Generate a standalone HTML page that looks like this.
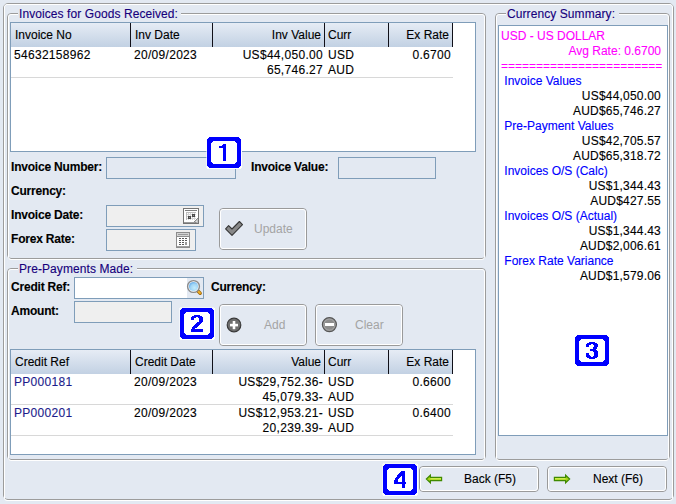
<!DOCTYPE html>
<html><head><meta charset="utf-8">
<style>
*{margin:0;padding:0;box-sizing:border-box}
html,body{width:676px;height:504px;overflow:hidden;background:#E3E9F2;font-family:"Liberation Sans",sans-serif;font-size:12px;color:#000}
body{-webkit-text-stroke:0.12px currentColor}
.a{position:absolute}
.etch{position:absolute;border:1px solid #9C9C9C;border-radius:4px}
.etch::before{content:"";position:absolute;left:0;top:0;right:0;bottom:-2px;border:1px solid #fff;border-radius:3px}
.gt{position:absolute;background:#E3E9F2;color:#16007C;padding:0 3.5px 0 1px;line-height:14px;white-space:nowrap;letter-spacing:0.08px}
.lbl{position:absolute;font-weight:bold;color:#000;white-space:nowrap;line-height:14px;letter-spacing:-0.2px}
.fld{position:absolute;border:1px solid #7F9DB9;background:transparent}
.tbl{position:absolute;border:1px solid #7F9DB9;background:#fff;overflow:hidden}
.hdr{position:absolute;left:0;top:0;height:24px;background:linear-gradient(#E6ECF5,#C2D1E3)}
.hc{position:absolute;top:0;height:24px;line-height:24px;color:#000;white-space:nowrap;border-right:1px solid #101018}
.row{position:absolute;left:0;height:31px;border-bottom:1px solid #D8D8D8}
.c{position:absolute;top:1px;line-height:15px;white-space:nowrap;color:#000;letter-spacing:0.3px}
.r{text-align:right}
.bd{position:absolute;width:34px;height:31px;font-weight:bold;font-size:24px;line-height:31px;text-align:center;color:#0000FF;-webkit-text-stroke:0}
.btn{position:absolute;border:1px solid #9A9A9A;border-radius:4px}
.btn::before{content:"";position:absolute;left:0;top:0;right:0;bottom:0;border:1px solid #fff;border-radius:3px}
.bt{position:absolute;white-space:nowrap;line-height:14px}
.dis{-webkit-text-stroke:0}
.sum{position:absolute;white-space:nowrap;line-height:15px}
.sum.r{letter-spacing:0.2px}
</style></head><body>

<!-- outer frame -->
<div class="etch" style="left:3px;top:3px;width:671px;height:497px;border-radius:5px"></div>

<!-- group 1 -->
<div class="etch" style="left:7px;top:13px;width:479px;height:246px"></div>
<div class="gt" style="left:18px;top:7px">Invoices for Goods Received:</div>

<div class="tbl" style="left:10px;top:22px;width:466px;height:130px">
  <div class="hdr" style="width:442px"></div>
  <div class="hc" style="left:0;width:120px;padding-left:4px">Invoice No</div>
  <div class="hc" style="left:120px;width:82px;padding-left:4px">Inv Date</div>
  <div class="hc r" style="left:202px;width:112px;padding-right:3px">Inv Value</div>
  <div class="hc" style="left:314px;width:64px;padding-left:3px">Curr</div>
  <div class="hc r" style="left:378px;width:64px;padding-right:3px">Ex Rate</div>
  <div class="row" style="top:24px;width:442px">
    <div class="c" style="left:3px">54632158962</div>
    <div class="c" style="left:123px">20/09/2023</div>
    <div class="c r" style="left:202px;width:110px">US$44,050.00<br>65,746.27</div>
    <div class="c" style="left:317px">USD<br>AUD</div>
    <div class="c r" style="left:378px;width:62px">0.6700</div>
  </div>
</div>

<div class="lbl" style="left:11px;top:160px">Invoice Number:</div>
<div class="fld" style="left:106px;top:157px;width:130px;height:22px"></div>
<div class="lbl" style="left:251px;top:160px">Invoice Value:</div>
<div class="fld" style="left:338px;top:157px;width:98px;height:22px"></div>
<div class="lbl" style="left:11px;top:184px">Currency:</div>
<div class="lbl" style="left:11px;top:208px">Invoice Date:</div>
<div class="fld" style="left:106px;top:205px;width:98px;height:22px;background:#EFEFEF"></div>
<div class="lbl" style="left:11px;top:232px">Forex Rate:</div>
<div class="fld" style="left:106px;top:229px;width:90px;height:22px;background:#EFEFEF"></div>

<div class="btn" style="left:219px;top:208px;width:88px;height:42px"></div>
<div class="bt dis" style="left:254px;top:222px;color:#A4A4A4">Update</div>


<!-- calendar icon -->
<svg class="a" style="left:183px;top:208px" width="16" height="16" viewBox="0 0 16 16" shape-rendering="crispEdges"><rect width="16" height="16" fill="#fff"/><rect x="0" y="0" width="1" height="1" fill="#747474"/><rect x="0" y="1" width="1" height="1" fill="#747474"/><rect x="0" y="2" width="1" height="1" fill="#747474"/><rect x="0" y="3" width="1" height="1" fill="#747474"/><rect x="0" y="4" width="1" height="1" fill="#747474"/><rect x="0" y="5" width="1" height="1" fill="#747474"/><rect x="0" y="6" width="1" height="1" fill="#747474"/><rect x="0" y="7" width="1" height="1" fill="#747474"/><rect x="0" y="8" width="1" height="1" fill="#747474"/><rect x="0" y="9" width="1" height="1" fill="#747474"/><rect x="0" y="10" width="1" height="1" fill="#747474"/><rect x="0" y="11" width="1" height="1" fill="#747474"/><rect x="0" y="12" width="1" height="1" fill="#747474"/><rect x="0" y="13" width="1" height="1" fill="#747474"/><rect x="0" y="14" width="1" height="1" fill="#747474"/><rect x="0" y="15" width="1" height="1" fill="#747474"/><rect x="1" y="0" width="1" height="1" fill="#747474"/><rect x="1" y="14" width="1" height="1" fill="#9A9A9A"/><rect x="1" y="15" width="1" height="1" fill="#747474"/><rect x="2" y="0" width="1" height="1" fill="#747474"/><rect x="2" y="2" width="1" height="1" fill="#7C7C7C"/><rect x="2" y="14" width="1" height="1" fill="#9A9A9A"/><rect x="2" y="15" width="1" height="1" fill="#747474"/><rect x="3" y="0" width="1" height="1" fill="#747474"/><rect x="3" y="2" width="1" height="1" fill="#7C7C7C"/><rect x="3" y="4" width="1" height="1" fill="#BDBDBD"/><rect x="3" y="5" width="1" height="1" fill="#BDBDBD"/><rect x="3" y="6" width="1" height="1" fill="#BDBDBD"/><rect x="3" y="7" width="1" height="1" fill="#BDBDBD"/><rect x="3" y="8" width="1" height="1" fill="#BDBDBD"/><rect x="3" y="9" width="1" height="1" fill="#BDBDBD"/><rect x="3" y="10" width="1" height="1" fill="#BDBDBD"/><rect x="3" y="11" width="1" height="1" fill="#BDBDBD"/><rect x="3" y="14" width="1" height="1" fill="#9A9A9A"/><rect x="3" y="15" width="1" height="1" fill="#747474"/><rect x="4" y="0" width="1" height="1" fill="#747474"/><rect x="4" y="2" width="1" height="1" fill="#7C7C7C"/><rect x="4" y="4" width="1" height="1" fill="#BDBDBD"/><rect x="4" y="6" width="1" height="1" fill="#D4D4D4"/><rect x="4" y="8" width="1" height="1" fill="#D4D4D4"/><rect x="4" y="10" width="1" height="1" fill="#D4D4D4"/><rect x="4" y="14" width="1" height="1" fill="#9A9A9A"/><rect x="4" y="15" width="1" height="1" fill="#747474"/><rect x="5" y="0" width="1" height="1" fill="#747474"/><rect x="5" y="2" width="1" height="1" fill="#7C7C7C"/><rect x="5" y="4" width="1" height="1" fill="#BDBDBD"/><rect x="5" y="5" width="1" height="1" fill="#D4D4D4"/><rect x="5" y="6" width="1" height="1" fill="#D4D4D4"/><rect x="5" y="7" width="1" height="1" fill="#D4D4D4"/><rect x="5" y="8" width="1" height="1" fill="#4A4A4A"/><rect x="5" y="9" width="1" height="1" fill="#4A4A4A"/><rect x="5" y="10" width="1" height="1" fill="#4A4A4A"/><rect x="5" y="11" width="1" height="1" fill="#D4D4D4"/><rect x="5" y="14" width="1" height="1" fill="#9A9A9A"/><rect x="5" y="15" width="1" height="1" fill="#747474"/><rect x="6" y="0" width="1" height="1" fill="#747474"/><rect x="6" y="2" width="1" height="1" fill="#7C7C7C"/><rect x="6" y="4" width="1" height="1" fill="#BDBDBD"/><rect x="6" y="6" width="1" height="1" fill="#D4D4D4"/><rect x="6" y="8" width="1" height="1" fill="#4A4A4A"/><rect x="6" y="9" width="1" height="1" fill="#8C8C8C"/><rect x="6" y="10" width="1" height="1" fill="#4A4A4A"/><rect x="6" y="14" width="1" height="1" fill="#9A9A9A"/><rect x="6" y="15" width="1" height="1" fill="#747474"/><rect x="7" y="0" width="1" height="1" fill="#747474"/><rect x="7" y="2" width="1" height="1" fill="#7C7C7C"/><rect x="7" y="4" width="1" height="1" fill="#BDBDBD"/><rect x="7" y="5" width="1" height="1" fill="#D4D4D4"/><rect x="7" y="6" width="1" height="1" fill="#D4D4D4"/><rect x="7" y="7" width="1" height="1" fill="#D4D4D4"/><rect x="7" y="8" width="1" height="1" fill="#4A4A4A"/><rect x="7" y="9" width="1" height="1" fill="#4A4A4A"/><rect x="7" y="10" width="1" height="1" fill="#4A4A4A"/><rect x="7" y="11" width="1" height="1" fill="#D4D4D4"/><rect x="7" y="14" width="1" height="1" fill="#9A9A9A"/><rect x="7" y="15" width="1" height="1" fill="#747474"/><rect x="8" y="0" width="1" height="1" fill="#747474"/><rect x="8" y="2" width="1" height="1" fill="#7C7C7C"/><rect x="8" y="4" width="1" height="1" fill="#BDBDBD"/><rect x="8" y="6" width="1" height="1" fill="#D4D4D4"/><rect x="8" y="8" width="1" height="1" fill="#D4D4D4"/><rect x="8" y="10" width="1" height="1" fill="#D4D4D4"/><rect x="8" y="14" width="1" height="1" fill="#9A9A9A"/><rect x="8" y="15" width="1" height="1" fill="#747474"/><rect x="9" y="0" width="1" height="1" fill="#747474"/><rect x="9" y="2" width="1" height="1" fill="#7C7C7C"/><rect x="9" y="4" width="1" height="1" fill="#BDBDBD"/><rect x="9" y="5" width="1" height="1" fill="#D4D4D4"/><rect x="9" y="6" width="1" height="1" fill="#4A4A4A"/><rect x="9" y="7" width="1" height="1" fill="#4A4A4A"/><rect x="9" y="8" width="1" height="1" fill="#4A4A4A"/><rect x="9" y="9" width="1" height="1" fill="#D4D4D4"/><rect x="9" y="10" width="1" height="1" fill="#D4D4D4"/><rect x="9" y="11" width="1" height="1" fill="#D4D4D4"/><rect x="9" y="14" width="1" height="1" fill="#9A9A9A"/><rect x="9" y="15" width="1" height="1" fill="#747474"/><rect x="10" y="0" width="1" height="1" fill="#747474"/><rect x="10" y="2" width="1" height="1" fill="#7C7C7C"/><rect x="10" y="4" width="1" height="1" fill="#BDBDBD"/><rect x="10" y="6" width="1" height="1" fill="#4A4A4A"/><rect x="10" y="7" width="1" height="1" fill="#8C8C8C"/><rect x="10" y="8" width="1" height="1" fill="#4A4A4A"/><rect x="10" y="10" width="1" height="1" fill="#D4D4D4"/><rect x="10" y="14" width="1" height="1" fill="#9A9A9A"/><rect x="10" y="15" width="1" height="1" fill="#747474"/><rect x="11" y="0" width="1" height="1" fill="#747474"/><rect x="11" y="2" width="1" height="1" fill="#7C7C7C"/><rect x="11" y="4" width="1" height="1" fill="#BDBDBD"/><rect x="11" y="5" width="1" height="1" fill="#D4D4D4"/><rect x="11" y="6" width="1" height="1" fill="#4A4A4A"/><rect x="11" y="7" width="1" height="1" fill="#4A4A4A"/><rect x="11" y="8" width="1" height="1" fill="#4A4A4A"/><rect x="11" y="9" width="1" height="1" fill="#D4D4D4"/><rect x="11" y="10" width="1" height="1" fill="#D4D4D4"/><rect x="11" y="11" width="1" height="1" fill="#D4D4D4"/><rect x="11" y="13" width="1" height="1" fill="#8A8A8A"/><rect x="11" y="14" width="1" height="1" fill="#9A9A9A"/><rect x="11" y="15" width="1" height="1" fill="#747474"/><rect x="12" y="0" width="1" height="1" fill="#747474"/><rect x="12" y="2" width="1" height="1" fill="#7C7C7C"/><rect x="12" y="4" width="1" height="1" fill="#BDBDBD"/><rect x="12" y="6" width="1" height="1" fill="#D4D4D4"/><rect x="12" y="8" width="1" height="1" fill="#D4D4D4"/><rect x="12" y="10" width="1" height="1" fill="#D4D4D4"/><rect x="12" y="12" width="1" height="1" fill="#8A8A8A"/><rect x="12" y="13" width="1" height="1" fill="#C4C4C4"/><rect x="12" y="14" width="1" height="1" fill="#8A8A8A"/><rect x="12" y="15" width="1" height="1" fill="#747474"/><rect x="13" y="0" width="1" height="1" fill="#747474"/><rect x="13" y="2" width="1" height="1" fill="#7C7C7C"/><rect x="13" y="11" width="1" height="1" fill="#8A8A8A"/><rect x="13" y="12" width="1" height="1" fill="#C4C4C4"/><rect x="13" y="13" width="1" height="1" fill="#E0E0E0"/><rect x="13" y="14" width="1" height="1" fill="#A8A8A8"/><rect x="13" y="15" width="1" height="1" fill="#747474"/><rect x="14" y="0" width="1" height="1" fill="#747474"/><rect x="14" y="10" width="1" height="1" fill="#8A8A8A"/><rect x="14" y="11" width="1" height="1" fill="#C4C4C4"/><rect x="14" y="12" width="1" height="1" fill="#C4C4C4"/><rect x="14" y="13" width="1" height="1" fill="#C4C4C4"/><rect x="14" y="14" width="1" height="1" fill="#BBBBBB"/><rect x="14" y="15" width="1" height="1" fill="#747474"/><rect x="15" y="0" width="1" height="1" fill="#747474"/><rect x="15" y="1" width="1" height="1" fill="#747474"/><rect x="15" y="2" width="1" height="1" fill="#747474"/><rect x="15" y="3" width="1" height="1" fill="#747474"/><rect x="15" y="4" width="1" height="1" fill="#747474"/><rect x="15" y="5" width="1" height="1" fill="#747474"/><rect x="15" y="6" width="1" height="1" fill="#747474"/><rect x="15" y="7" width="1" height="1" fill="#747474"/><rect x="15" y="8" width="1" height="1" fill="#747474"/><rect x="15" y="9" width="1" height="1" fill="#747474"/><rect x="15" y="10" width="1" height="1" fill="#747474"/><rect x="15" y="11" width="1" height="1" fill="#747474"/><rect x="15" y="12" width="1" height="1" fill="#747474"/><rect x="15" y="13" width="1" height="1" fill="#747474"/><rect x="15" y="14" width="1" height="1" fill="#747474"/><rect x="15" y="15" width="1" height="1" fill="#747474"/></svg>
<!-- calculator icon -->
<svg class="a" style="left:176px;top:232px" width="14" height="16" viewBox="0 0 14 16" shape-rendering="crispEdges">
<rect x="0" y="0" width="14" height="16" fill="#8C8C8C"/>
<rect x="1" y="1" width="12" height="3" fill="#D4D4D4"/>
<rect x="2" y="2" width="10" height="1" fill="#9A9A9A"/>
<rect x="1" y="5" width="12" height="9" fill="#fff"/>
<rect x="3" y="6" width="2" height="1" fill="#5A5A5A"/><rect x="6" y="6" width="2" height="1" fill="#5A5A5A"/><rect x="9" y="6" width="2" height="1" fill="#5A5A5A"/>
<rect x="3" y="8" width="2" height="1" fill="#5A5A5A"/><rect x="6" y="8" width="2" height="1" fill="#5A5A5A"/><rect x="9" y="8" width="2" height="1" fill="#5A5A5A"/>
<rect x="3" y="10" width="2" height="1" fill="#5A5A5A"/><rect x="6" y="10" width="2" height="1" fill="#5A5A5A"/><rect x="9" y="10" width="2" height="3" fill="#9A9A9A"/>
<rect x="3" y="12" width="2" height="1" fill="#5A5A5A"/><rect x="6" y="12" width="2" height="1" fill="#5A5A5A"/>
<rect x="1" y="14" width="12" height="1" fill="#A0A0A0"/>
</svg>
<!-- check icon -->
<svg class="a" style="left:222px;top:218px" width="24" height="22" viewBox="0 0 24 22">
<path d="M3.6 10.9 L6.6 7.7 L10 11 L17.4 3.5 L20.5 6.6 L10 17.3 Z" fill="#888" stroke="#353535" stroke-width="1.1" stroke-linejoin="round"/>
</svg>

<svg class="a" style="left:206px;top:136px" width="36" height="33" viewBox="-1 -1 36 33" shape-rendering="crispEdges"><path d="M0 -1H34V0H35V31H34V32H0V31H-1V0H0Z" fill="#fff" fill-opacity="0.55"/><path d="M34 0H35V31H34V32H0V30H34Z" fill="#fff"/><path d="M2 0H32V1H33V2H34V29H33V30H32V31H2V30H1V29H0V2H1V1H2Z" fill="#0000FF"/><path d="M6 4H28V5H29V6H30V25H29V26H28V27H6V26H5V25H4V6H5V5H6Z" fill="#fff"/><path d="M16 7h3v17h-3ZM15 8h1v1h-1ZM12 9h4v2h-4Z" fill="#0000FF"/></svg>

<!-- group 2 -->
<div class="etch" style="left:7px;top:268px;width:479px;height:192px"></div>
<div class="gt" style="left:18px;top:262px">Pre-Payments Made:</div>
<div class="lbl" style="left:11px;top:280px">Credit Ref:</div>
<div class="fld" style="left:74px;top:277px;width:130px;height:22px;background:#fff"></div>
<div class="lbl" style="left:211px;top:280px">Currency:</div>
<div class="lbl" style="left:11px;top:304px">Amount:</div>
<div class="fld" style="left:74px;top:301px;width:98px;height:22px;background:#EFEFEF"></div>

<div class="btn" style="left:219px;top:304px;width:88px;height:42px"></div>
<div class="bt dis" style="left:264px;top:318px;color:#A4A4A4">Add</div>
<div class="btn" style="left:315px;top:304px;width:88px;height:42px"></div>
<div class="bt dis" style="left:355px;top:318px;color:#A4A4A4">Clear</div>


<!-- magnifier -->
<div class="a" style="left:187px;top:278px;width:16px;height:20px;background:#E3E9F2"></div>
<svg class="a" style="left:186px;top:279px" width="17" height="18" viewBox="0 0 17 18">
<defs><radialGradient id="mg" cx="0.6" cy="0.65" r="0.7"><stop offset="0" stop-color="#C4ECFC"/><stop offset="0.6" stop-color="#9ED4F6"/><stop offset="1" stop-color="#5CA6E8"/></radialGradient></defs>
<path d="M12.2 12.2 L14.2 14.2" stroke="#A06A10" stroke-width="3.4" stroke-linecap="round"/>
<path d="M12.6 12.6 L14 14" stroke="#F5B020" stroke-width="1.8" stroke-linecap="round"/>
<circle cx="7.5" cy="7.5" r="5.9" fill="#fff" stroke="#8A8A8A" stroke-width="1.4"/>
<circle cx="7.5" cy="7.5" r="4.6" fill="url(#mg)"/>
</svg>
<!-- plus -->
<svg class="a" style="left:226px;top:317px" width="16" height="16" viewBox="0 0 16 16">
<circle cx="8" cy="8" r="6.8" fill="#6E6E6E" stroke="#3A3A3A" stroke-width="1.2"/>
<rect x="4" y="6.8" width="8" height="2.6" fill="#fff"/>
<rect x="6.7" y="4" width="2.6" height="8.2" fill="#fff"/>
</svg>
<!-- minus -->
<svg class="a" style="left:321px;top:317px" width="16" height="16" viewBox="0 0 16 16">
<circle cx="8.4" cy="7.6" r="7" fill="#8C8C8C" stroke="#555" stroke-width="1.2"/>
<circle cx="8.4" cy="7.6" r="5.6" fill="none" stroke="#B0B0B0" stroke-width="0.8"/>
<rect x="4" y="6" width="9" height="3" fill="#fff"/>
</svg>

<svg class="a" style="left:179px;top:307px" width="36" height="33" viewBox="-1 -1 36 33" shape-rendering="crispEdges"><path d="M0 -1H34V0H35V31H34V32H0V31H-1V0H0Z" fill="#fff" fill-opacity="0.55"/><path d="M34 0H35V31H34V32H0V30H34Z" fill="#fff"/><path d="M2 0H32V1H33V2H34V29H33V30H32V31H2V30H1V29H0V2H1V1H2Z" fill="#0000FF"/><path d="M6 4H28V5H29V6H30V25H29V26H28V27H6V26H5V25H4V6H5V5H6Z" fill="#fff"/><path d="M14 7h6v1h-6ZM12 8h10v1h-10ZM11 9h5v1h-5ZM18 9h5v1h-5ZM11 10h3v1h-3ZM19 10h4v1h-4ZM11 11h3v1h-3ZM19 11h4v1h-4ZM19 12h4v1h-4ZM19 13h4v1h-4ZM17 14h5v1h-5ZM16 15h5v1h-5ZM15 16h5v1h-5ZM14 17h5v1h-5ZM13 18h5v1h-5ZM12 19h5v1h-5ZM12 20h3v1h-3ZM11 21h12v1h-12ZM11 22h12v1h-12ZM11 23h12v1h-12Z" fill="#0000FF"/></svg>

<div class="tbl" style="left:10px;top:349px;width:466px;height:106px">
  <div class="hdr" style="width:442px"></div>
  <div class="hc" style="left:0;width:120px;padding-left:4px">Credit Ref</div>
  <div class="hc" style="left:120px;width:82px;padding-left:4px">Credit Date</div>
  <div class="hc r" style="left:202px;width:112px;padding-right:3px">Value</div>
  <div class="hc" style="left:314px;width:64px;padding-left:3px">Curr</div>
  <div class="hc r" style="left:378px;width:64px;padding-right:3px">Ex Rate</div>
  <div class="row" style="top:24px;width:442px">
    <div class="c" style="left:3px;color:#1C1C8C">PP000181</div>
    <div class="c" style="left:123px">20/09/2023</div>
    <div class="c r" style="left:202px;width:110px">US$29,752.36-<br>45,079.33-</div>
    <div class="c" style="left:317px">USD<br>AUD</div>
    <div class="c r" style="left:378px;width:62px">0.6600</div>
  </div>
  <div class="row" style="top:55px;width:442px">
    <div class="c" style="left:3px;color:#1C1C8C">PP000201</div>
    <div class="c" style="left:123px">20/09/2023</div>
    <div class="c r" style="left:202px;width:110px">US$12,953.21-<br>20,239.39-</div>
    <div class="c" style="left:317px">USD<br>AUD</div>
    <div class="c r" style="left:378px;width:62px">0.6400</div>
  </div>
</div>

<!-- group 3 -->
<div class="etch" style="left:495px;top:13px;width:175px;height:447px"></div>
<div class="gt" style="left:506px;top:7px">Currency Summary:</div>
<div class="a" style="left:498px;top:25px;width:170px;height:411px;border:1px solid #7F9DB9;background:#fff"></div>


<div class="sum" style="left:501px;top:29px;color:#FF00FF">USD - US DOLLAR</div>
<div class="sum r" style="left:499px;width:162px;top:44px;color:#FF00FF;letter-spacing:0">Avg Rate: 0.6700</div>
<div class="sum" style="left:501px;top:59px;color:#FF00FF">=======================</div>
<div class="sum" style="left:501px;top:74px;color:#0000FF">&nbsp;Invoice Values</div>
<div class="sum r" style="left:499px;width:162px;top:89px;color:#000">US$44,050.00</div>
<div class="sum r" style="left:499px;width:162px;top:104px;color:#000">AUD$65,746.27</div>
<div class="sum" style="left:501px;top:119px;color:#0000FF">&nbsp;Pre-Payment Values</div>
<div class="sum r" style="left:499px;width:162px;top:134px;color:#000">US$42,705.57</div>
<div class="sum r" style="left:499px;width:162px;top:149px;color:#000">AUD$65,318.72</div>
<div class="sum" style="left:501px;top:164px;color:#0000FF">&nbsp;Invoices O/S (Calc)</div>
<div class="sum r" style="left:499px;width:162px;top:179px;color:#000">US$1,344.43</div>
<div class="sum r" style="left:499px;width:162px;top:194px;color:#000">AUD$427.55</div>
<div class="sum" style="left:501px;top:209px;color:#0000FF">&nbsp;Invoices O/S (Actual)</div>
<div class="sum r" style="left:499px;width:162px;top:224px;color:#000">US$1,344.43</div>
<div class="sum r" style="left:499px;width:162px;top:239px;color:#000">AUD$2,006.61</div>
<div class="sum" style="left:501px;top:254px;color:#0000FF">&nbsp;Forex Rate Variance</div>
<div class="sum r" style="left:499px;width:162px;top:269px;color:#000">AUD$1,579.06</div>
<svg class="a" style="left:574px;top:334px" width="36" height="33" viewBox="-1 -1 36 33" shape-rendering="crispEdges"><path d="M0 -1H34V0H35V31H34V32H0V31H-1V0H0Z" fill="#fff" fill-opacity="0.55"/><path d="M34 0H35V31H34V32H0V30H34Z" fill="#fff"/><path d="M2 0H32V1H33V2H34V29H33V30H32V31H2V30H1V29H0V2H1V1H2Z" fill="#0000FF"/><path d="M6 4H28V5H29V6H30V25H29V26H28V27H6V26H5V25H4V6H5V5H6Z" fill="#fff"/><path d="M14 7h6v1h-6ZM12 8h10v1h-10ZM11 9h5v1h-5ZM18 9h5v1h-5ZM11 10h3v1h-3ZM19 10h4v1h-4ZM11 11h3v1h-3ZM19 11h4v1h-4ZM18 12h4v1h-4ZM18 13h4v1h-4ZM15 14h6v1h-6ZM15 15h7v1h-7ZM18 16h5v1h-5ZM19 17h4v1h-4ZM11 18h3v1h-3ZM19 18h4v1h-4ZM11 19h3v1h-3ZM19 19h4v1h-4ZM11 20h4v1h-4ZM19 20h4v1h-4ZM11 21h5v1h-5ZM18 21h5v1h-5ZM12 22h10v1h-10ZM14 23h6v1h-6Z" fill="#0000FF"/></svg>

<!-- bottom buttons -->
<div class="btn" style="left:419px;top:466px;width:120px;height:26px"></div>
<div class="bt" style="left:464px;top:472px">Back (F5)</div>
<div class="btn" style="left:547px;top:466px;width:120px;height:26px"></div>
<div class="bt" style="left:593px;top:472px">Next (F6)</div>

<!-- back arrow -->
<svg class="a" style="left:424px;top:473px" width="20" height="12" viewBox="0 0 20 12">
<path d="M2.4 6 L6.4 2.2 L6.4 4.3 L17.6 4.3 L17.6 7.7 L6.4 7.7 L6.4 9.8 Z" fill="#A8D418" stroke="#3F8A00" stroke-width="1.2" stroke-linejoin="miter"/>
<rect x="6.5" y="5.2" width="10.5" height="1.1" fill="#D6F05A"/>
</svg>
<!-- next arrow -->
<svg class="a" style="left:552px;top:473px" width="20" height="12" viewBox="0 0 20 12">
<path d="M17.6 6 L13.6 2.2 L13.6 4.3 L2.4 4.3 L2.4 7.7 L13.6 7.7 L13.6 9.8 Z" fill="#A8D418" stroke="#3F8A00" stroke-width="1.2" stroke-linejoin="miter"/>
<rect x="3" y="5.2" width="10.5" height="1.1" fill="#D6F05A"/>
</svg>

<svg class="a" style="left:382px;top:463px" width="36" height="33" viewBox="-1 -1 36 33" shape-rendering="crispEdges"><path d="M0 -1H34V0H35V31H34V32H0V31H-1V0H0Z" fill="#fff" fill-opacity="0.55"/><path d="M34 0H35V31H34V32H0V30H34Z" fill="#fff"/><path d="M2 0H32V1H33V2H34V29H33V30H32V31H2V30H1V29H0V2H1V1H2Z" fill="#0000FF"/><path d="M6 4H28V5H29V6H30V25H29V26H28V27H6V26H5V25H4V6H5V5H6Z" fill="#fff"/><path d="M18 7h4v1h-4ZM17 8h5v1h-5ZM16 9h6v1h-6ZM15 10h7v1h-7ZM14 11h8v1h-8ZM14 12h4v1h-4ZM19 12h3v1h-3ZM13 13h4v1h-4ZM19 13h3v1h-3ZM12 14h4v1h-4ZM19 14h3v1h-3ZM12 15h3v1h-3ZM19 15h3v1h-3ZM11 16h4v1h-4ZM19 16h3v1h-3ZM11 17h4v1h-4ZM19 17h3v1h-3ZM11 18h12v1h-12ZM11 19h12v1h-12ZM19 20h3v1h-3ZM19 21h3v1h-3ZM19 22h3v1h-3ZM19 23h3v1h-3Z" fill="#0000FF"/></svg>

</body></html>
